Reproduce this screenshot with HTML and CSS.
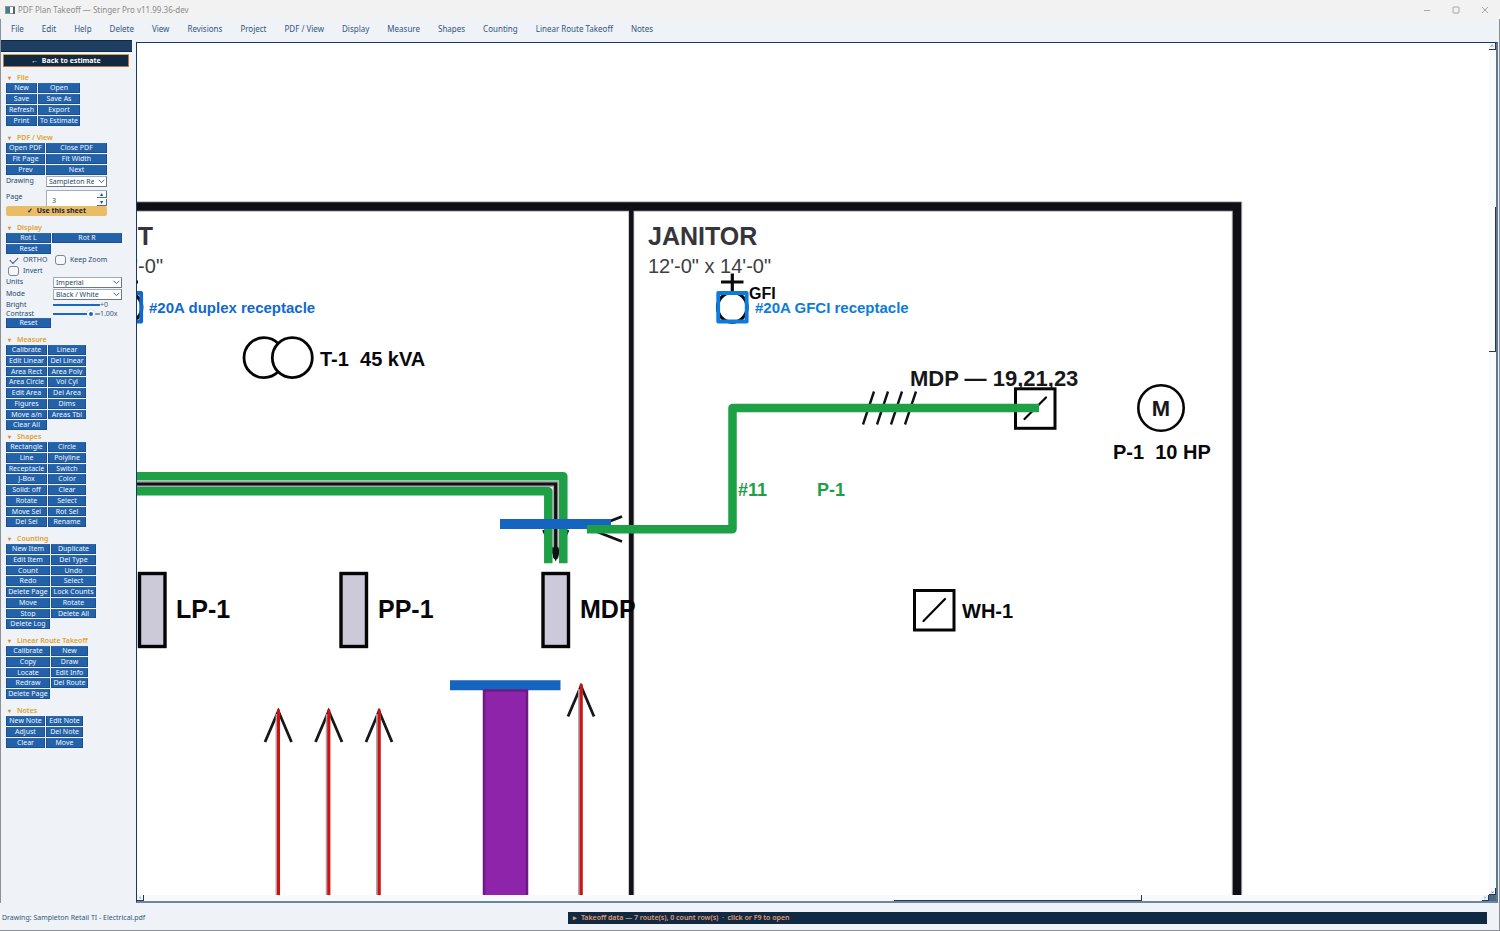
FILE: index.html
```html
<!DOCTYPE html>
<html lang="en">
<head>
<meta charset="utf-8">
<title>PDF Plan Takeoff — Stinger Pro v11.99.36-dev</title>
<link rel="stylesheet" href="styles.css">
</head>
<body>
<div class="window">
  <header class="titlebar">
    <svg class="app-icon" viewBox="0 0 10 8" aria-hidden="true"><rect x="0.5" y="0.5" width="9" height="7" fill="#fff" stroke="#8d949b"/><rect x="1" y="1" width="4" height="6" fill="#3f8186"/><rect x="8" y="1" width="2" height="7" fill="#5a626b"/></svg>
    <h1 class="title">PDF Plan Takeoff — Stinger Pro v11.99.36-dev</h1>
    <div class="controls">
      <button class="control" aria-label="Minimize"><svg viewBox="0 0 8 8"><path d="M1 4.5H7"/></svg></button>
      <button class="control" aria-label="Maximize"><svg viewBox="0 0 8 8"><rect x="1" y="1" width="6" height="6" rx="0.6"/></svg></button>
      <button class="control" aria-label="Close"><svg viewBox="0 0 8 8"><path d="M1 1L7 7M7 1L1 7"/></svg></button>
    </div>
  </header>
  <nav class="menubar">
    <button>File</button><button>Edit</button><button>Help</button><button>Delete</button><button>View</button><button>Revisions</button><button>Project</button><button>PDF / View</button><button>Display</button><button>Measure</button><button>Shapes</button><button>Counting</button><button>Linear Route Takeoff</button><button>Notes</button>
  </nav>
  <div class="workspace">
    <aside class="sidebar">
      <div class="band"></div>
      <button class="back">←&nbsp; Back to estimate</button>
      <section class="group">
        <h2>File</h2>
        <div class="tools rows-4 cols-file">
          <button>New</button><button>Open</button><button>Save</button><button>Save As</button><button>Refresh</button><button>Export</button><button>Print</button><button>To Estimate</button>
        </div>
      </section>
      <section class="group">
        <h2>PDF / View</h2>
        <div class="tools rows-3 cols-pdf">
          <button>Open PDF</button><button>Close PDF</button><button>Fit Page</button><button>Fit Width</button><button>Prev</button><button>Next</button>
        </div>
        <div class="field drawing">
          <label for="drawing">Drawing</label>
          <span class="combo"><select id="drawing"><option>Sampleton Retail TI - Electrical.pdf</option></select><svg viewBox="0 0 8 6"><path d="M1.5 1.5L4 4L6.500 1.500"/></svg></span>
        </div>
        <div class="field page">
          <label for="page">Page</label>
          <span class="spin"><input id="page" type="text" inputmode="numeric" value="3"><span class="steps"><button aria-label="Next page">▴</button><button aria-label="Previous page">▾</button></span></span>
        </div>
        <button class="use">✓&nbsp; Use this sheet</button>
      </section>
      <section class="group">
        <h2>Display</h2>
        <div class="tools rows-2 cols-display">
          <button>Rot L</button><button>Rot R</button><button>Reset</button>
        </div>
        <div class="checks">
          <label><input class="flat" type="checkbox" checked>ORTHO</label>
          <label><input type="checkbox">Keep Zoom</label>
        </div>
        <div class="checks">
          <label><input type="checkbox">Invert</label>
        </div>
        <div class="field wide">
          <label for="units">Units</label>
          <span class="combo"><select id="units"><option>Imperial</option></select><svg viewBox="0 0 8 6"><path d="M1.5 1.5L4 4L6.500 1.500"/></svg></span>
        </div>
        <div class="field wide">
          <label for="mode">Mode</label>
          <span class="combo"><select id="mode"><option>Black / White</option></select><svg viewBox="0 0 8 6"><path d="M1.5 1.5L4 4L6.500 1.500"/></svg></span>
        </div>
        <div class="slider">
          <label for="bright">Bright</label><input class="bare" id="bright" type="range" min="-100" max="100" value="0"><output for="bright">+0</output>
        </div>
        <div class="slider contrast">
          <label for="contrast">Contrast</label><input id="contrast" type="range" min="0" max="100" value="100"><output for="contrast">═1.00x</output>
        </div>
        <div class="tools rows-1 cols-display"><button>Reset</button></div>
      </section>
      <section class="group tight">
        <h2>Measure</h2>
        <div class="tools rows-8 cols-measure">
          <button>Calibrate</button><button>Linear</button><button>Edit Linear</button><button>Del Linear</button><button>Area Rect</button><button>Area Poly</button><button>Area Circle</button><button>Vol Cyl</button><button>Edit Area</button><button>Del Area</button><button>Figures</button><button>Dims</button><button>Move a/n</button><button>Areas Tbl</button><button>Clear All</button>
        </div>
      </section>
      <section class="group">
        <h2>Shapes</h2>
        <div class="tools rows-8 cols-measure">
          <button>Rectangle</button><button>Circle</button><button>Line</button><button>Polyline</button><button>Receptacle</button><button>Switch</button><button>J-Box</button><button>Color</button><button>Solid: off</button><button>Clear</button><button>Rotate</button><button>Select</button><button>Move Sel</button><button>Rot Sel</button><button>Del Sel</button><button>Rename</button>
        </div>
      </section>
      <section class="group">
        <h2>Counting</h2>
        <div class="tools rows-8 cols-counting">
          <button>New Item</button><button>Duplicate</button><button>Edit Item</button><button>Del Type</button><button>Count</button><button>Undo</button><button>Redo</button><button>Select</button><button>Delete Page</button><button>Lock Counts</button><button>Move</button><button>Rotate</button><button>Stop</button><button>Delete All</button><button>Delete Log</button>
        </div>
      </section>
      <section class="group">
        <h2>Linear Route Takeoff</h2>
        <div class="tools rows-5 cols-route">
          <button>Calibrate</button><button>New</button><button>Copy</button><button>Draw</button><button>Locate</button><button>Edit Info</button><button>Redraw</button><button>Del Route</button><button>Delete Page</button>
        </div>
      </section>
      <section class="group">
        <h2>Notes</h2>
        <div class="tools rows-3 cols-notes">
          <button>New Note</button><button>Edit Note</button><button>Adjust</button><button>Del Note</button><button>Clear</button><button>Move</button>
        </div>
      </section>
    </aside>
    <main class="viewer">
      <svg class="plan" viewBox="137 43 1352 852" preserveAspectRatio="xMinYMin meet" role="img" aria-label="Electrical plan">
        <!-- walls -->
        <path d="M130 206.500H1237V900" fill="none" stroke="#b9b9bd" stroke-width="10.500"/>
        <path d="M631.300 206V900" stroke="#b9b9bd" stroke-width="6"/>
        <path d="M130 206.500H1237V900" fill="none" stroke="#0f0e14" stroke-width="8.500"/>
        <path d="M631.300 206V900" stroke="#111116" stroke-width="4.500"/>

        <!-- room labels -->
        <g class="room"><text x="153" y="245" text-anchor="end">T</text><text x="648" y="245">JANITOR</text></g>
        <g class="dims"><text x="163" y="273" text-anchor="end">'-0"</text><text x="648" y="273">12'-0" x 14'-0"</text></g>

        <!-- receptacles -->
        <g fill="none" stroke="#0a0a0e" stroke-width="3.200">
          <path d="M115.500 282H138M732.300 273.500V292M721 282H743.500"/>
          <circle cx="127" cy="307.300" r="14.800"/><circle cx="732.300" cy="307.300" r="14.800"/>
        </g>
        <rect x="112.700" y="293" width="28.500" height="28.500" fill="none" stroke="#1068d0" stroke-width="3.800" stroke-linejoin="round"/>
        <rect x="718.200" y="293" width="28.500" height="28.500" fill="none" stroke="#0c7cdc" stroke-width="3.800" stroke-linejoin="round"/>
        <text class="b16" x="749" y="299">GFI</text>
        <text class="tag duplex" x="149" y="313">#20A duplex receptacle</text>
        <text class="tag gfci" x="755" y="313">#20A GFCI receptacle</text>

        <!-- transformer -->
        <g fill="#fff" stroke="#050505" stroke-width="2.800"><circle cx="264" cy="357.700" r="20"/><circle cx="292.300" cy="357.700" r="20"/></g>
        <text class="b20" x="320" y="366">T-1  45 kVA</text>

        <!-- motor, disconnect and water heater -->
        <g fill="none" stroke="#050505" stroke-width="3">
          <rect x="1015.500" y="388.800" width="39.500" height="39.500"/><rect x="914.500" y="590.500" width="39.500" height="39.500"/>
          <circle cx="1161" cy="408" r="22.700" stroke-width="2.600"/>
          <path d="M1024.500 419L1046 397.500M923.500 621L945 599" stroke-width="2.200" stroke-linecap="round"/>
        </g>
        <path d="M863 424.500L874 391.500M877 424.500L888 391.500M891 424.500L902 391.500M905 424.500L916 391.500" stroke="#111116" stroke-width="2.400"/>
        <text class="b22" x="910" y="386">MDP — 19,21,23</text>
        <text class="b22" x="1161" y="416" text-anchor="middle">M</text>
        <text class="b20" x="1113" y="459">P-1  10 HP</text>
        <text class="b20" x="962" y="618">WH-1</text>

        <!-- panels -->
        <g fill="#cccad9" stroke="#050505" stroke-width="3.400"><rect x="139.500" y="573.500" width="25.500" height="73"/><rect x="341" y="573.500" width="25.500" height="73"/><rect x="543" y="573.500" width="25.500" height="73"/></g>
        <g class="b25"><text x="176" y="618">LP-1</text><text x="378" y="618">PP-1</text><text x="580" y="618">MDP</text></g>

        <!-- feeder routes -->
        <g fill="none" stroke="#111116">
          <path d="M130 484H555.700V556" stroke="#aaa8aa" stroke-width="6"/>
          <path d="M130 484H555.700V556" stroke-width="3.200"/>
          <path d="M543.500 530L555.700 558L568 530M622 516.500L590 529L622 541.500" stroke-width="2.800"/>
          <path d="M555.700 549V556.500" stroke-width="5.400" stroke-linecap="round"/>
        </g>
        <g fill="none" stroke="#1ea046" stroke-width="8.500" stroke-linejoin="round"><path d="M130 476.300H563.300V563.300"/><path d="M130 491.300H548.300V563.300"/></g>
        <path d="M500 524H611M450 685.300H560.500" stroke="#1464c0" stroke-width="10"/>
        <path d="M1039 408H732.500V529.300H587" fill="none" stroke="#1ea046" stroke-width="8.500" stroke-linejoin="round"/>
        <g class="route"><text x="738" y="496">#11</text><text x="817" y="496">P-1</text></g>
        <rect x="484" y="690.500" width="43" height="210" fill="#8e24aa" stroke="#6c1b82" stroke-width="2.500"/>

        <!-- branch home runs -->
        <g fill="none" stroke="#17171c" stroke-width="2.800"><path d="M265 742L278.300 711L291.500 742M315.500 742L328.700 711L342 742M366 742L379 711L392 742M568 716.500L581 686L594 716.500"/></g>
        <path d="M277.800 714V900M328 714V900M378.300 714V900M580.300 689V900" stroke="#a9a4aa" stroke-width="4.500"/>
        <path d="M278.500 709.500V900M328.800 709.500V900M379.200 709.500V900M581.200 684V900" stroke="#d4100f" stroke-width="3"/>
      </svg>
      <div class="vscroll"><button aria-label="Scroll up">^</button><span class="vthumb"></span><button aria-label="Scroll down">⌄</button></div>
      <div class="hscroll"><button aria-label="Scroll left">‹</button><span class="hthumb"></span><button aria-label="Scroll right">›</button></div>
      <div class="corner"></div>
    </main>
  </div>
  <footer class="statusbar">
    <div class="status">Drawing: Sampleton Retail TI - Electrical.pdf</div>
    <button class="drawer">▸&nbsp; Takeoff data — 7 route(s), 0 count row(s) &nbsp;·&nbsp; click or F9 to open</button>
  </footer>
</div>
</body>
</html>
```
FILE: styles.css
```css
* { box-sizing: border-box; }
body {
  margin: 0;
  font-family: "Noto Sans", "Open Sans", sans-serif;
  font-size: 7px;
  line-height: 10px;
  color: #24486f;
}
button, input, select {
  margin: 0;
  padding: 0;
  border: 0;
  border-radius: 0;
  background: none;
  font: inherit;
  color: inherit;
  white-space: nowrap;
}
.window {
  height: 100vh;
  display: flex;
  flex-direction: column;
  background: #eff3f8;
}

/* title bar and menus */
.titlebar {
  height: 19px;
  flex: none;
  display: flex;
  align-items: center;
  gap: 3px;
  padding-left: 5px;
  background: #f2f2f2;
}
.app-icon { width: 10px; height: 8px; }
.title { margin: 0; font-size: 8px; font-weight: 400; color: #8b8b8b; }
.controls { margin-left: auto; display: flex; padding-right: 1px; }
.control { width: 29px; height: 18px; display: grid; place-items: center; }
.control svg { width: 8px; height: 8px; fill: none; stroke: #929292; stroke-width: 0.8; }
.menubar {
  height: 21px;
  flex: none;
  display: flex;
  align-items: center;
  gap: 18px;
  padding: 0 0 2px 10px;
  border-left: 1px solid #8d9096;
  border-right: 1px solid #8d9096;
  font-size: 8px;
  color: #34557a;
}
.workspace {
  flex: 1;
  min-height: 0;
  display: flex;
  gap: 4px;
  border-left: 1px solid #8d9096;
  border-right: 1px solid #8d9096;
}

/* sidebar */
.sidebar { width: 131px; flex: none; overflow: hidden; }
.band { height: 12px; background: #1e3f60; border-top: 1px solid #0d2a47; border-bottom: 1px solid #0d2a47; }
.back {
  display: block;
  width: 126px;
  height: 13px;
  margin: 2px 0 5px 2px;
  border: 1px solid #c8703c;
  border-top-color: #e9a13a;
  border-radius: 1px;
  background: #102a43;
  color: #fff;
  font-weight: 700;
  line-height: 11px;
}
.group { padding-left: 5px; margin-bottom: 6px; }
.group.tight { margin-bottom: 1px; }
.group h2 { margin: 0; height: 11px; font-size: 7px; line-height: 11px; font-weight: 600; color: #e0a02c; }
.group h2::before { content: "▾"; display: inline-block; width: 9px; padding-left: 2px; font-size: 6px; color: #e08a2c; }
.tools { display: grid; grid-auto-rows: 1fr; gap: 1px; }
.tools button { background: #2361a8; border: 1px solid #1b4f90; border-top-color: #2c69ae; color: #f1f6fc; line-height: 8px; overflow: hidden; }
.rows-1 { height: 10px; }
.rows-2 { height: 21px; }
.rows-3 { height: 32px; }
.rows-4 { height: 43px; }
.rows-5 { height: 53px; }
.rows-8 { height: 85px; }
.cols-file { grid-template-columns: 31px 42px; }
.cols-pdf { grid-template-columns: 39px 61px; }
.cols-display { grid-template-columns: 45px 70px; }
.cols-measure { grid-template-columns: 41px 38px; }
.cols-counting { grid-template-columns: 44px 45px; }
.cols-route { grid-template-columns: 44px 37px; }
.cols-notes { grid-template-columns: 39px 37px; }

.field { display: flex; align-items: center; height: 12px; }
.field > label { width: 40px; }
.field.wide > label { width: 47px; }
.combo { position: relative; width: 61px; height: 11px; }
.wide .combo { width: 69px; }
.combo select {
  display: block;
  width: 100%;
  height: 11px;
  padding: 0 12px 0 2px;
  border: 1px solid #9fadbd;
  border-right-color: #6a7888;
  border-bottom-color: #6a7888;
  background: #fff;
  line-height: 9px;
  appearance: none;
  overflow: hidden;
}
.combo svg { position: absolute; right: 1px; top: 2px; width: 9px; height: 7px; fill: none; stroke: #33516f; stroke-width: 0.8; pointer-events: none; }
.field.page { height: 19px; align-items: flex-start; padding-top: 3px; }
.page > label { padding-top: 2px; }
.spin { display: flex; width: 61px; height: 16px; background: #fff; border: 1px solid #9fadbd; border-right: 0; border-bottom: 0; }
.spin input { flex: 1; min-width: 0; height: 16px; padding: 2px 0 0 5px; }
.steps { display: flex; flex-direction: column; justify-content: space-between; width: 10px; }
.steps button { height: 7px; overflow: hidden; border-right: 1px solid #5d6b7b; border-bottom: 1px solid #5d6b7b; font-size: 6px; line-height: 6px; background: #f7f9fb; }
.use {
  display: block;
  width: 101px;
  height: 10px;
  border-radius: 2px;
  background: #e9bd66;
  color: #17233a;
  font-weight: 700;
  line-height: 10px;
  overflow: hidden;
}

.checks { display: flex; height: 11px; align-items: center; }
.checks label { display: flex; align-items: center; gap: 4px; width: 47px; white-space: nowrap; }
.checks input { appearance: none; flex: none; width: 11px; height: 10px; margin-left: 2px; border: 1px solid #7c8794; border-radius: 3px; background: #f6f9fb; display: grid; place-items: center; }
.checks input.flat { border-color: transparent; background: none; }
.checks input:checked::before { content: ""; width: 7px; height: 4px; border: solid #33516f; border-width: 0 0 1px 1px; transform: rotate(-45deg); }
.slider { display: flex; align-items: center; height: 9px; white-space: nowrap; }
.slider label { width: 47px; }
.slider input { appearance: none; width: 42px; height: 8px; background: linear-gradient(#1669c5, #1669c5) 0 3px / 34px 2px no-repeat; }
.slider input.bare { width: 47px; background-size: 47px 2px; }
.slider input::-webkit-slider-thumb { appearance: none; width: 8px; height: 8px; border: 2px solid #fff; border-radius: 50%; background: #1669c5; box-shadow: 0 0 1px #8896a6; }
.slider input.bare::-webkit-slider-thumb { visibility: hidden; }
.slider output { color: #3f5a78; }

/* drawing viewer */
.viewer {
  flex: 1;
  min-width: 0;
  margin: 2px 1px 0 0;
  display: grid;
  grid-template-columns: 1fr 7px;
  grid-template-rows: 1fr 6px;
  border: 1px solid #173a63;
  border-right: 2px solid #5f7693;
  border-bottom: 2px solid #6f84a0;
  background: #fff;
}
.plan { display: block; width: 100%; height: 100%; min-height: 0; overflow: hidden; }
.plan text { font-family: "Liberation Sans", Arial, sans-serif; font-weight: 700; font-size: 20px; fill: #08080b; white-space: pre; }
.plan .room text { font-size: 25px; fill: #35353b; }
.plan .dims text { font-size: 20px; font-weight: 400; fill: #3e3e44; }
.plan .b16 { font-size: 16px; }
.plan .b22 { font-size: 22px; fill: #17171b; }
.plan .b25 text { font-size: 25px; }
.plan .tag { font-size: 15px; }
.plan .duplex { fill: #1068d0; }
.plan .gfci { fill: #0c7cdc; }
.plan .route text { font-size: 18px; fill: #1ea046; }
.vscroll { display: flex; flex-direction: column; background: #f8fafc; }
.hscroll { display: flex; background: #f8fafc; }
.vscroll button, .hscroll button { flex: none; width: 7px; height: 7px; overflow: hidden; border-right: 1px solid #27384c; border-bottom: 1px solid #27384c; font-size: 6px; line-height: 6px; background: #f3f6f9; }
.hscroll button { height: 6px; line-height: 5px; }
.vthumb { height: 17%; margin: 157px 0 auto; border-right: 1px solid #27384c; border-bottom: 1px solid #27384c; }
.hthumb { width: 248px; margin: 0 auto 0 750px; border-right: 1px solid #27384c; border-bottom: 1px solid #27384c; }
.corner { background: #4a6788; }

/* status bar */
.statusbar {
  height: 28px;
  flex: none;
  display: flex;
  align-items: center;
  gap: 2px;
  padding: 3px 12px 0 2px;
  border: 1px solid #8d9096;
  border-width: 0 1px 1px 0;
}
.status { flex: 0 0 38%; color: #34557a; }
.drawer { flex: 1; height: 12px; padding-left: 5px; background: #102a43; color: #e79a70; font-weight: 600; line-height: 12px; text-align: left; }
```
